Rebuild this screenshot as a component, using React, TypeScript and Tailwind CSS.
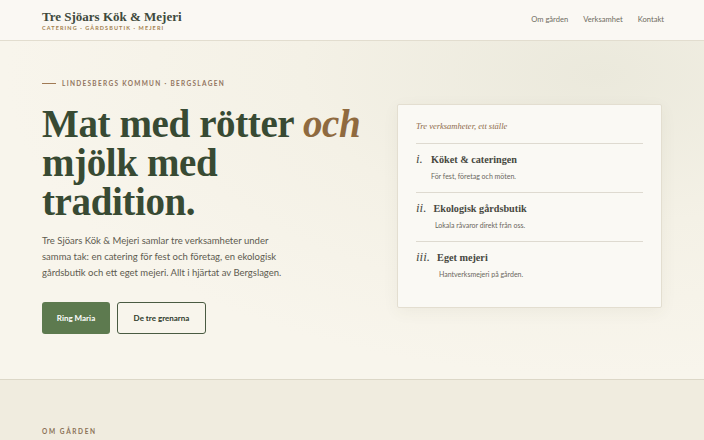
import { useState } from "react"

const serif = "font-['Liberation_Serif','DejaVu_Serif',serif]"
const sans = "font-['Lato','Open_Sans',sans-serif]"

const branches = [
  { num: "i.", title: "Köket & cateringen", text: "För fest, företag och möten." },
  { num: "ii.", title: "Ekologisk gårdsbutik", text: "Lokala råvaror direkt från oss." },
  { num: "iii.", title: "Eget mejeri", text: "Hantverksmejeri på gården." },
]

function Header() {
  return (
    <header className="h-[41px] border-b border-[#e2ddcf] bg-[#faf8f3] flex items-center justify-between pl-[42px] pr-[40px]">
      <div className="flex flex-col pt-[1px]">
        <span className={`${serif} text-[13px] leading-[15px] font-bold text-[#3f4a3c]`}>
          Tre Sjöars Kök &amp; Mejeri
        </span>
        <span className={`${sans} text-[5.5px] leading-[8px] font-bold tracking-[0.2em] text-[#a3814f]`}>
          CATERING · GÅRDSBUTIK · MEJERI
        </span>
      </div>
      <nav className={`${sans} flex gap-[15px] text-[7.6px] text-[#6f6d62]`}>
        <a>Om gården</a>
        <a>Verksamhet</a>
        <a>Kontakt</a>
      </nav>
    </header>
  )
}

export default function App() {
  const [active] = useState(0)

  return (
    <div className={`${sans} w-full min-h-screen bg-[#f0ecdf]`}>
      <Header />

      <section className="h-[339px] border-b border-[#dcd7c7] bg-[radial-gradient(ellipse_at_85%_10%,#ebe9dc_0%,#f4f1e6_35%,#f8f5ec_70%)] flex gap-[34px] px-[42px] pt-[38px]">
        <div className="w-[321px] shrink-0">
          <div className="flex items-center gap-[6px]">
            <span className="w-[14px] h-px bg-[#a07a55]" />
            <span className="text-[6.5px] font-bold tracking-[0.2em] text-[#927560]">
              LINDESBERGS KOMMUN · BERGSLAGEN
            </span>
          </div>

          <h1 className={`${serif} mt-[15px] whitespace-nowrap text-[39px] leading-[39px] font-bold text-[#384a33] tracking-[-0.01em]`}>
            Mat med rötter <em className="text-[#8f6a3f]">och</em>
            <br />
            mjölk med
            <br />
            tradition.
          </h1>

          <p className="mt-[12px] w-[240px] text-[9.5px] leading-[16px] text-[#5e5b50]">
            Tre Sjöars Kök &amp; Mejeri samlar tre verksamheter under samma tak: en catering för fest och
            företag, en ekologisk gårdsbutik och ett eget mejeri. Allt i hjärtat av Bergslagen.
          </p>

          <div className="mt-[21px] flex gap-[7px]">
            <button className="h-[32px] w-[68px] rounded-[3px] bg-[#5d7a4f] text-white text-[8px] font-bold">
              Ring Maria
            </button>
            <button className="h-[32px] w-[89px] rounded-[3px] border border-[#4a5b42] text-[#2f3a2b] text-[8px] font-bold">
              De tre grenarna
            </button>
          </div>
        </div>

        <div className="mt-[25px] w-[266px] h-[204px] bg-[#faf9f4] border border-[#e3ded0] rounded-[2px] shadow-[0_4px_16px_rgba(90,80,50,0.06)] px-[18px] pt-[16px]">
          <p className={`${serif} italic text-[8.5px] leading-[10px] text-[#8e6b4a] pb-[12px] border-b border-[#dedad0]`}>
            Tre verksamheter, ett ställe
          </p>
          {branches.map((b, i) => (
            <div
              key={b.num}
              className={`pt-[8px] pb-[11px] ${i < branches.length - 1 ? "border-b border-[#dedad0]" : ""} ${active === i ? "" : ""}`}
            >
              <div className="flex items-baseline gap-[7px] h-[14px]">
                <span className={`${serif} italic text-[13px] leading-[14px] text-[#4a4c44] min-w-[8px]`}>{b.num}</span>
                <span className={`${serif} font-bold text-[10.2px] leading-[14px] text-[#47483f]`}>{b.title}</span>
              </div>
              <p className={`mt-[5px] text-[7px] leading-[10px] text-[#6a675d] ${i === 2 ? "pl-[23px]" : i === 1 ? "pl-[19px]" : "pl-[15px]"}`}>
                {b.text}
              </p>
            </div>
          ))}
        </div>
      </section>

      <section className="px-[42px] pt-[47px]">
        <p className="text-[6.5px] font-bold tracking-[0.25em] text-[#8a7156]">OM GÅRDEN</p>
      </section>
    </div>
  )
}
